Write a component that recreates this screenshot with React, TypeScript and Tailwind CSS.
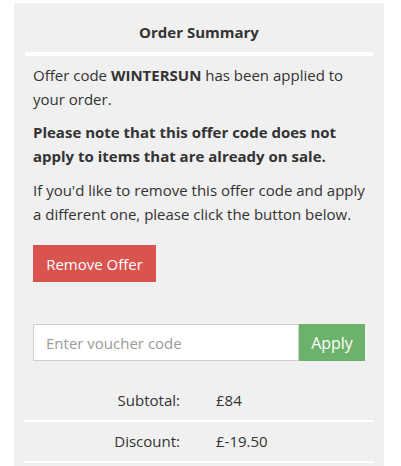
import React from "react";

const rows = [
  { label: "Subtotal:", value: "£84" },
  { label: "Discount:", value: "£-19.50" },
];

export default function App() {
  return (
    <div className="min-h-screen bg-white pt-[3px] font-['Open_Sans',sans-serif] text-[#333]">
      <div className="mx-[14px] w-[370px] bg-[#f0f0f0] pb-6">
        <h2 className="h-[49px] pt-[19px] text-center text-[15px] font-bold leading-[20px]">
          Order Summary
        </h2>
        <div className="mx-[11px] h-[4px] bg-white" />

        <div className="px-[19px] pt-[7px] text-[15px] leading-[24px]">
          <p>
            Offer code <strong>WINTERSUN</strong> has been applied to your
            order.
          </p>
          <p className="mt-[9px] font-bold">
            Please note that this offer code does not apply to items that are
            already on sale.
          </p>
          <p className="mt-[10px]">
            If you'd like to remove this offer code and apply a different one,
            please click the button below.
          </p>
          <button className="mt-[19px] h-[37px] w-[123px] bg-[#d9534f] text-[15px] text-white">
            Remove Offer
          </button>

          <div className="mt-[42px] flex h-[37px] w-[332px]">
            <input
              placeholder="Enter voucher code"
              className="min-w-0 flex-1 border border-[#cfcfcf] bg-white px-3 text-[15px] placeholder:text-[#9a9a9a] outline-none"
            />
            <button className="w-[66px] bg-[#6db26a] text-[16px] text-white">
              Apply
            </button>
          </div>
        </div>

        <div className="mx-[10px] mt-[20px]">
          {rows.map((r) => (
            <div
              key={r.label}
              className="flex h-[41px] items-center border-b-2 border-white text-[15px]"
            >
              <span className="w-[156px] text-right">{r.label}</span>
              <span className="ml-[36px]">{r.value}</span>
            </div>
          ))}
        </div>
      </div>
    </div>
  );
}
